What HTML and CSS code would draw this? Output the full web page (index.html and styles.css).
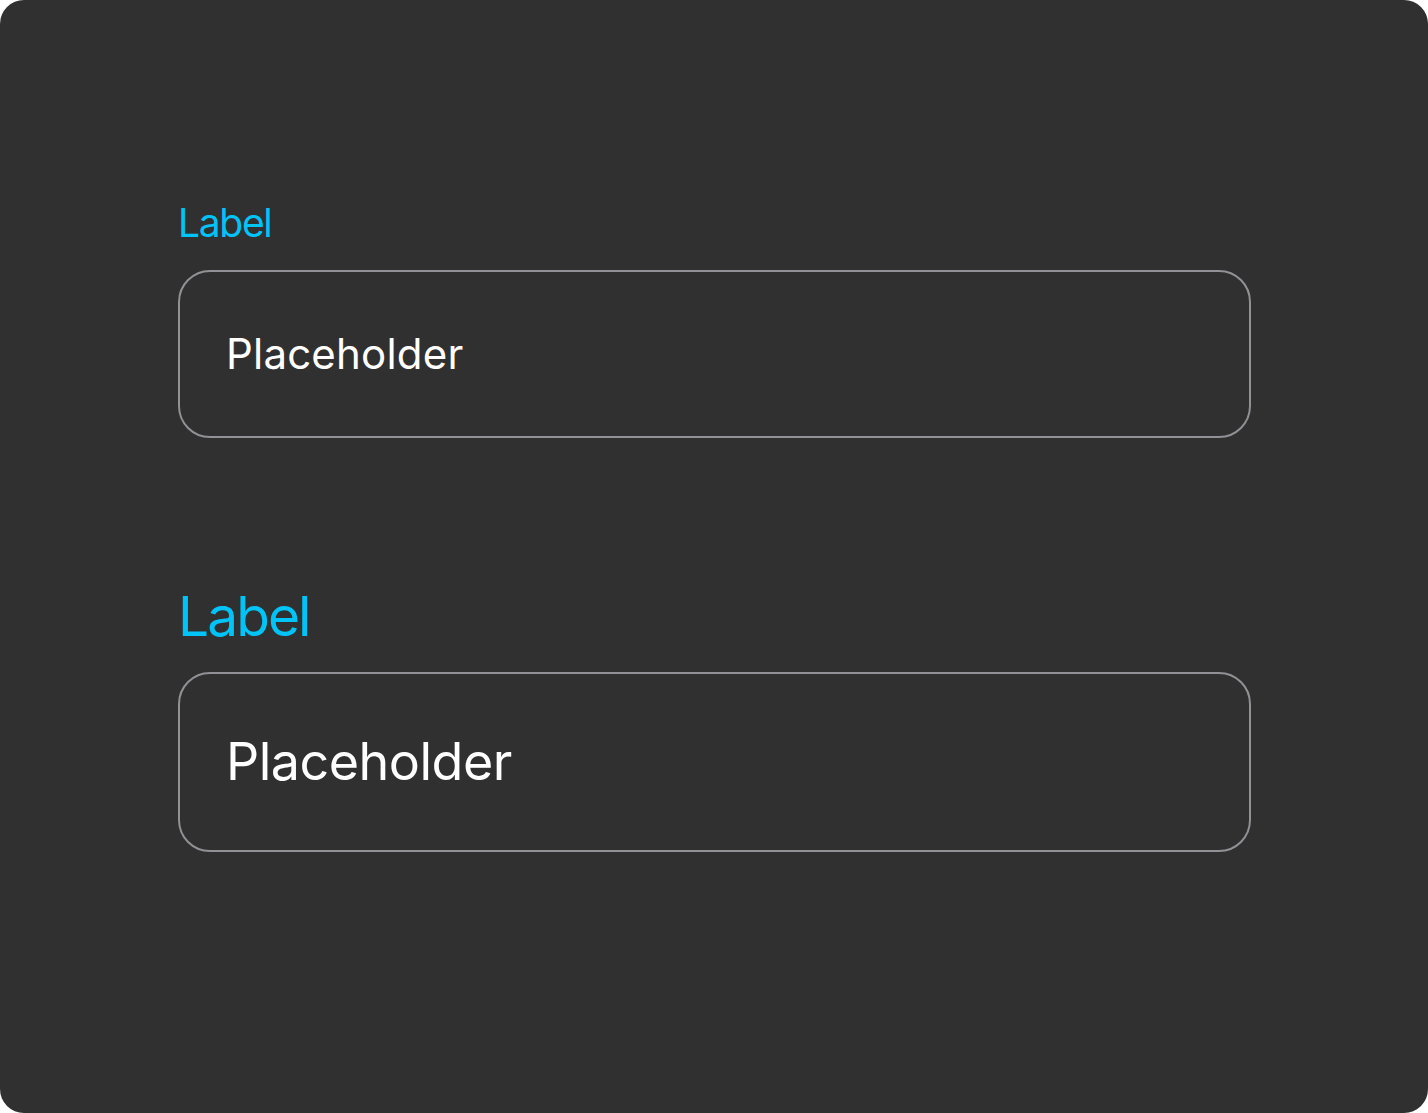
FILE: index.html
```html
<!DOCTYPE html>
<html>
<head>
<meta charset="utf-8">
<link rel="stylesheet" href="styles.css">
</head>
<body>
<div class="panel">
  <div class="field field-sm">
    <label class="label">Label</label>
    <div class="input"><span class="placeholder">Placeholder</span></div>
  </div>
  <div class="field field-lg">
    <label class="label">Label</label>
    <div class="input"><span class="placeholder">Placeholder</span></div>
  </div>
</div>
</body>
</html>
```
FILE: styles.css
```css
html, body {
  margin: 0;
  padding: 0;
  background: #ffffff;
}
.panel {
  box-sizing: border-box;
  width: 1428px;
  height: 1113px;
  background: #303030;
  border-radius: 24px;
  padding: 202px 177px 0 178px;
  display: flex;
  flex-direction: column;
  font-family: Inter, "Noto Sans", sans-serif;
}
.field {
  display: flex;
  flex-direction: column;
}
.label {
  color: #00c3f7;
  line-height: 1;
}
.input {
  box-sizing: border-box;
  border: 2px solid #919196;
  border-radius: 32px;
  display: flex;
  align-items: center;
  padding: 0 46px;
}
.placeholder {
  color: #ffffff;
  line-height: 1;
}
.field-sm .label { font-size: 39px; letter-spacing: -1.3px; padding-top: 1px; }
.field-sm .input { margin-top: 28px; height: 168px; }
.field-sm .placeholder { font-size: 42px; letter-spacing: 0.2px; }
.field-lg { margin-top: 150px; }
.field-lg .label { font-size: 55px; letter-spacing: -1.9px; padding-top: 1px; }
.field-lg .input { margin-top: 28px; height: 180px; }
.field-lg .placeholder { font-size: 52px; letter-spacing: -0.5px; }
```
